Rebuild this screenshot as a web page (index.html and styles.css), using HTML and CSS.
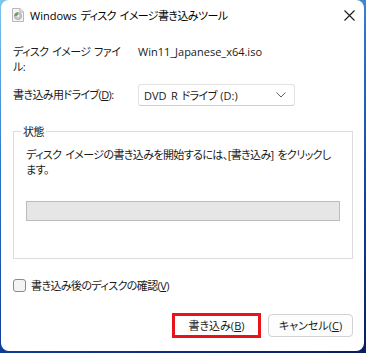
FILE: index.html
```html
<!DOCTYPE html>
<html lang="ja">
<head>
    <meta charset="UTF-8">
    <meta name="viewport" content="width=device-width, initial-scale=1.0">
    <title>Windows ディスク イメージ書き込みツール</title>
    <link rel="stylesheet" href="styles.css">
</head>
<body>

<div class="window">
    <div class="titlebar">
        <svg class="app-icon" width="12" height="14" viewBox="0 0 12 14">
            <path d="M0.5 0.5 H8 L11.5 4 V13.5 H0.5 Z" fill="#f4f4f4" stroke="#b8b8b8"/>
            <path d="M8 0.5 V4 H11.5" fill="#e2e2e2" stroke="#b8b8b8"/>
            <circle cx="6" cy="8" r="3.6" fill="#c9c9c9" stroke="#8f8f8f" stroke-width="0.6"/>
            <path d="M6 4.4 A3.6 3.6 0 0 0 2.4 8 H6 Z" fill="#5fa55a"/>
            <circle cx="6" cy="8" r="0.9" fill="#fff"/>
        </svg>
        <span class="title"><span class="latin">Windows</span> ディスク イメージ書き込みツール</span>
        <svg class="close" width="11" height="11" viewBox="0 0 11 11">
            <path d="M0.5 0.5 L10.5 10.5 M10.5 0.5 L0.5 10.5" stroke="#1a1a1a" stroke-width="1.1"/>
        </svg>
    </div>

    <div class="content">
        <div class="row file-row">
            <div class="label">ディスク イメージ ファイ<br>ル:</div>
            <div class="value latin">Win11_Japanese_x64.iso</div>
        </div>

        <div class="row drive-row">
            <label class="label" for="drive">書き込み用ドライブ(<u>D</u>):</label>
            <div class="select" id="drive">
                <span><span class="latin">DVD R</span> ドライブ <span class="latin">(D:)</span></span>
                <svg width="10" height="6" viewBox="0 0 10 6">
                    <path d="M0.5 0.5 L5 5 L9.5 0.5" fill="none" stroke="#606060" stroke-width="1"/>
                </svg>
            </div>
        </div>

        <fieldset class="status">
            <legend>状態</legend>
            <p>ディスク イメージの書き込みを開始するには、[書き込み] をクリックし<br>ます。</p>
            <div class="progress"></div>
        </fieldset>

        <label class="check">
            <span class="box"></span>
            <span>書き込み後のディスクの確認(<u>V</u>)</span>
        </label>

        <div class="buttons">
            <button type="button" class="btn burn">書き込み(<u>B</u>)</button>
            <button type="button" class="btn">キャンセル(<u>C</u>)</button>
        </div>
    </div>
</div>

</body>
</html>
```

FILE: styles.css
```css
html, body {
    margin: 0;
    padding: 0;
}

body {
    width: 366px;
    height: 353px;
    overflow: hidden;
    background: linear-gradient(160deg, #7cc6ee 0%, #2a74cc 35%, #123f99 70%, #0a1d5e 100%);
    font-family: "Open Sans", "Noto Sans CJK JP", sans-serif;
    font-size: 11px;
    line-height: 15px;
    letter-spacing: -0.6px;
    word-spacing: 1.5px;
    color: #1a1a1a;
    font-feature-settings: "palt";
}

.latin {
    letter-spacing: 0;
}

.window {
    margin-left: 1px;
    width: 363px;
    height: 351px;
    background-color: #fff;
    border-radius: 8px;
    overflow: hidden;
}

.titlebar {
    height: 30px;
    display: flex;
    align-items: center;
    padding-left: 11px;
    padding-right: 9px;
}

.app-icon {
    margin-right: 6px;
    flex-shrink: 0;
}

.title {
    flex: 1;
    color: #000;
}

.content {
    padding: 14px 11px 0 12px;
}

.row {
    display: flex;
}

.label {
    width: 125px;
    flex-shrink: 0;
}

.drive-row {
    margin-top: 9px;
    align-items: center;
}

.select {
    width: 157px;
    height: 22px;
    box-sizing: border-box;
    border: 1px solid #e3e3e3;
    border-bottom-color: #cfcfcf;
    border-radius: 3px;
    display: flex;
    align-items: center;
    justify-content: space-between;
    padding: 0 8px 0 5px;
    margin-top: 1px;
}

.status {
    margin: 18px 0 0 0;
    padding: 0 12px 37px 12px;
    border: 1px solid #dcdcdc;
    min-width: 0;
}

.status legend {
    padding: 0 2px;
    margin-left: -5px;
}

.status p {
    margin: 8px 0 0 0;
    white-space: nowrap;
}

.progress {
    margin-top: 24px;
    height: 20px;
    box-sizing: border-box;
    border: 1px solid #bcbcbc;
    background-color: #e6e6e6;
}

.check {
    display: flex;
    align-items: center;
    margin-top: 19px;
}

.check .box {
    width: 13px;
    height: 13px;
    box-sizing: border-box;
    border: 1px solid #8a8a8a;
    border-radius: 3px;
    background-color: #f4f4f4;
    margin-right: 5px;
}

.buttons {
    display: flex;
    justify-content: flex-end;
    align-items: center;
    gap: 7px;
    margin-top: 20px;
}

.btn {
    font: inherit;
    color: #1a1a1a;
    width: 85px;
    height: 23px;
    background-color: #fdfdfd;
    border: 1px solid #d2d2d2;
    border-radius: 4px;
    padding: 0;
}

.btn.burn {
    width: 89px;
    height: 25px;
    border: 3px solid #e8141c;
    border-radius: 0;
    background-color: #fff;
}
```
